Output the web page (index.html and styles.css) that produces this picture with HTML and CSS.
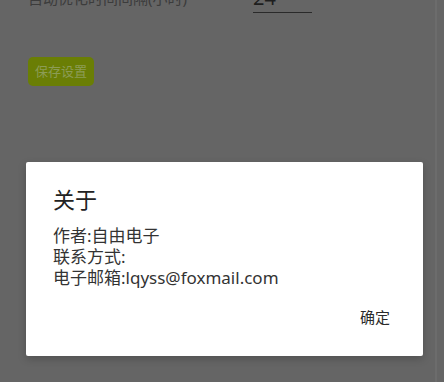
FILE: index.html
```html
<!DOCTYPE html>
<html lang="zh">
<head>
<meta charset="utf-8">
<link rel="stylesheet" href="styles.css">
</head>
<body>
<div class="page">
  <div class="row">
    <span class="label">自动优化时间间隔(小时)</span>
    <span class="input">24</span>
  </div>
  <div class="btn">保存设置</div>
</div>
<div class="overlay">
  <div class="dialog">
    <div class="title">关于</div>
    <div class="msg">作者:自由电子<br>联系方式:<br>电子邮箱:lqyss@foxmail.com</div>
    <div class="actions"><span class="ok">确定</span></div>
  </div>
</div>
</body>
</html>
```
FILE: styles.css
```css
html, body {
  margin: 0;
  padding: 0;
  height: 100%;
}
body {
  background: #656565;
  font-family: "Noto Sans", "Noto Sans CJK SC", sans-serif;
  overflow: hidden;
  position: relative;
  border-right: 5px solid #656565;
  box-sizing: border-box;
}
.page {
  padding: 0 0 0 28px;
  margin-top: -12px;
  border-right: 2px solid #6c6c6c;
  height: 394px;
  margin-right: 2px;
}
.row {
  display: flex;
  align-items: flex-start;
  height: 30px;
}
.label {
  color: #3c3c3c;
  font-size: 15px;
  line-height: 20px;
  width: 225px;
}
.input {
  color: #1e1e1e;
  font-size: 20px;
  line-height: 20px;
  width: 59px;
  border-bottom: 1.5px solid #2a2a2a;
  padding-bottom: 4px;
}
.btn {
  margin-top: 39px;
  width: 66px;
  height: 29px;
  border-radius: 5px;
  background: #6a7e05;
  color: #8c9c55;
  font-size: 13px;
  line-height: 29px;
  text-align: center;
}
.overlay {
  position: absolute;
  inset: 0;
  padding: 162px 0 0 26px;
}
.dialog {
  width: 397px;
  height: 194px;
  background: #fff;
  border-radius: 2px;
  box-shadow: 0 3px 8px rgba(0,0,0,0.2);
  box-sizing: border-box;
  padding: 22px 27px 0 27px;
  display: flex;
  flex-direction: column;
}
.title {
  font-size: 22px;
  line-height: 30px;
  color: #222;
}
.msg {
  margin-top: 11px;
  font-size: 17px;
  line-height: 21px;
  color: #333;
}
.actions {
  display: flex;
  justify-content: flex-end;
  margin-top: 19px;
  padding-right: 6px;
}
.ok {
  font-size: 15px;
  line-height: 20px;
  color: #2a2a2a;
}
```
